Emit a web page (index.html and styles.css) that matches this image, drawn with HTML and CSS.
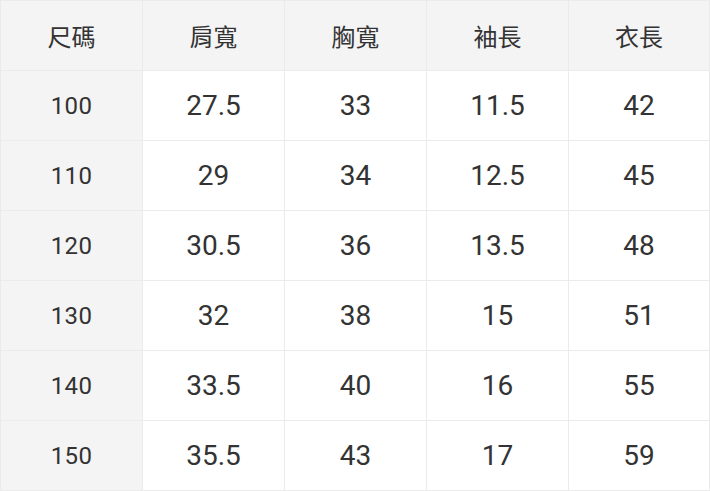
FILE: index.html
```html
<!DOCTYPE html>
<html lang="zh-Hant">
<head>
<meta charset="utf-8">
<title>尺碼表</title>
<link rel="stylesheet" href="styles.css">
</head>
<body>
<table class="size-table">
  <thead>
    <tr>
      <th class="col-size">尺碼</th>
      <th>肩寬</th>
      <th>胸寬</th>
      <th>袖長</th>
      <th class="col-last">衣長</th>
    </tr>
  </thead>
  <tbody>
    <tr><th class="col-size">100</th><td>27.5</td><td>33</td><td>11.5</td><td class="col-last">42</td></tr>
    <tr><th class="col-size">110</th><td>29</td><td>34</td><td>12.5</td><td class="col-last">45</td></tr>
    <tr><th class="col-size">120</th><td>30.5</td><td>36</td><td>13.5</td><td class="col-last">48</td></tr>
    <tr><th class="col-size">130</th><td>32</td><td>38</td><td>15</td><td class="col-last">51</td></tr>
    <tr><th class="col-size">140</th><td>33.5</td><td>40</td><td>16</td><td class="col-last">55</td></tr>
    <tr><th class="col-size">150</th><td>35.5</td><td>43</td><td>17</td><td class="col-last">59</td></tr>
  </tbody>
</table>
</body>
</html>
```
FILE: styles.css
```css
html, body {
  margin: 0;
  padding: 0;
  background: #ffffff;
}

.size-table {
  width: 710px;
  table-layout: fixed;
  border-collapse: separate;
  border-spacing: 0;
  border-top: 1px solid #ebebeb;
  border-left: 1px solid #ebebeb;
  font-family: Roboto, "Noto Sans CJK TC", sans-serif;
  color: #333333;
}

.size-table th,
.size-table td {
  box-sizing: border-box;
  width: 142px;
  height: 70px;
  padding: 0;
  text-align: center;
  vertical-align: middle;
  border-right: 1px solid #ebebeb;
  border-bottom: 1px solid #ebebeb;
  font-weight: 400;
}

.size-table .col-last {
  width: 141px;
}

.size-table thead th {
  background: #f4f4f4;
  font-size: 24px;
}

.size-table tbody th {
  background: #f4f4f4;
  font-size: 24px;
  letter-spacing: 0.3px;
}

.size-table tbody td {
  background: #ffffff;
  font-size: 28px;
}
```
